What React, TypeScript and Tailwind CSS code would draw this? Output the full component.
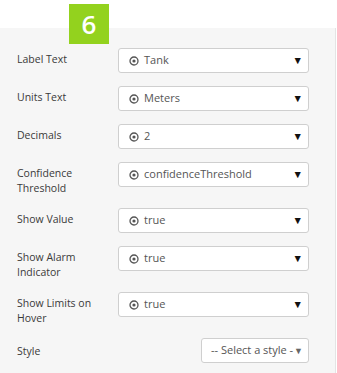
import React from 'react';

const fields = [
  { label: 'Label Text', value: 'Tank' },
  { label: 'Units Text', value: 'Meters' },
  { label: 'Decimals', value: '2' },
  { label: 'Confidence Threshold', value: 'confidenceThreshold', wrap: true },
  { label: 'Show Value', value: 'true' },
  { label: 'Show Alarm Indicator', value: 'true', wrap: true },
  { label: 'Show Limits on Hover', value: 'true', wrap: true },
];

const BoundIcon = () => (
  <svg width="10" height="10" viewBox="0 0 10 10" className="shrink-0">
    <circle cx="5" cy="5" r="4" fill="none" stroke="#555" strokeWidth="1.3" />
    <circle cx="5" cy="5" r="1.6" fill="#555" />
  </svg>
);

const App: React.FC = () => {
  return (
    <div className="w-[337px] h-[373px] bg-white overflow-hidden text-[10.5px]" style={{ fontFamily: '"Open Sans", "Noto Sans", sans-serif' }}>
      {/* Step badge */}
      <div className="pt-[4px] pl-[69px] relative z-10">
        <div className="w-[40px] h-[40px] bg-[#93d21e] text-white flex items-center justify-center text-[26px] font-semibold leading-none">6</div>
      </div>

      {/* Panel */}
      <div className="-mt-[16px] w-[336px] h-[400px] bg-[#f6f6f6] border-r border-[#e4e4e4] pt-[20px] pl-[17px]">
        {fields.map((f, i) => (
          <div key={i} className="flex items-start mb-[13px]">
            <div className="w-[101px] pt-[4px] pr-2 leading-[14.5px] text-[#3a3a3a]">{f.label}</div>
            <div className="w-[191px] h-[25px] bg-white border border-[#cfcfcf] rounded-[3px] flex items-center pl-[10px] pr-[5px] text-[#555]">
              <BoundIcon />
              <span className="ml-[5px] flex-1 text-[11px]">{f.value}</span>
              <span className="text-[10.5px] text-[#111]">▼</span>
            </div>
          </div>
        ))}
        <div className="flex items-start">
          <div className="w-[184px] pt-[6px] leading-[14.5px] text-[#3a3a3a]">Style</div>
          <div className="w-[108px] h-[25px] bg-white border border-[#cfcfcf] rounded-[3px] flex items-center pl-[9px] pr-[5px] text-[#555]">
            <span className="flex-1 text-[11px] whitespace-nowrap overflow-hidden">-- Select a style -</span>
            <span className="text-[9px] text-[#666]">▼</span>
          </div>
        </div>
      </div>
    </div>
  );
};

export default App;
